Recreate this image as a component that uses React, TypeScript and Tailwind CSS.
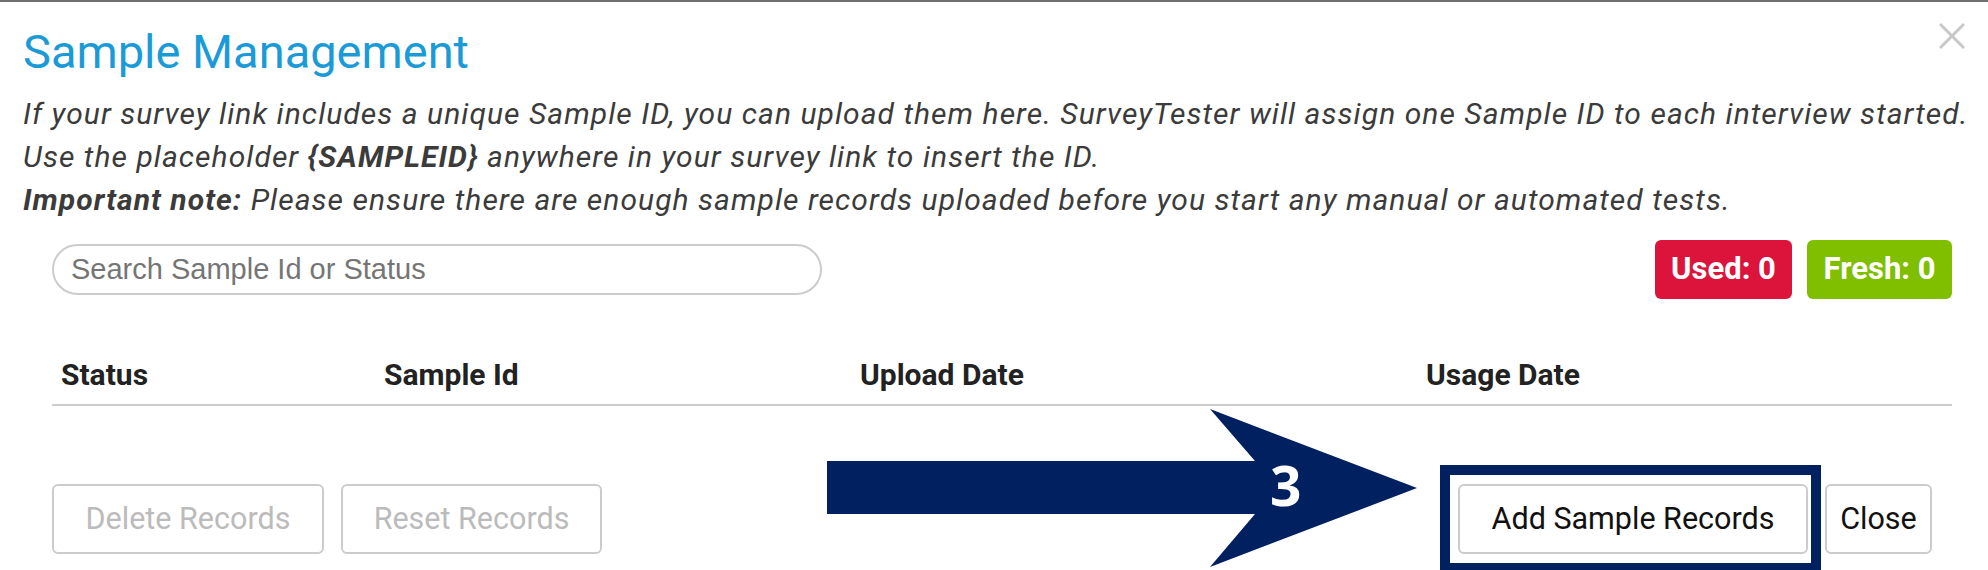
import React from "react";

export default function App() {
  return (
    <div className="relative w-[1988px] h-[570px] overflow-hidden bg-white border-t-2 border-[#6f6f6f] font-['Roboto',sans-serif]">
      {/* header */}
      <div className="flex items-start justify-between pl-[23px] pr-[23px] pt-[22px]">
        <h1 className="text-[47px] leading-[56px] text-[#1a9bd8] font-normal">Sample Management</h1>
        <button className="mt-[-1px] w-[26px] h-[26px] flex items-center justify-center" aria-label="close">
          <svg width="26" height="26" viewBox="0 0 26 26">
            <path d="M1 1 L25 25 M25 1 L1 25" stroke="#c8c8c8" strokeWidth="3" />
          </svg>
        </button>
      </div>

      {/* description */}
      <div className="pl-[23px] mt-[12px] italic text-[30px] leading-[43px] tracking-[1.05px] text-[#3b3b3b] whitespace-nowrap">
        <div>If your survey link includes a unique Sample ID, you can upload them here. SurveyTester will assign one Sample ID to each interview started.</div>
        <div>
          Use the placeholder <span className="font-bold">{"{SAMPLEID}"}</span> anywhere in your survey link to insert the ID.
        </div>
        <div>
          <span className="font-bold">Important note:</span> Please ensure there are enough sample records uploaded before you start any manual or automated tests.
        </div>
      </div>

      {/* search + badges */}
      <div className="mt-[19px] pl-[52px] pr-[36px] flex items-center justify-between">
        <div className="w-[770px] h-[51px] rounded-full border-2 border-[#cccccc] flex items-center pl-[17px]">
          <span className="font-['Liberation_Sans',Arial,sans-serif] text-[29px] text-[#757575]">Search Sample Id or Status</span>
        </div>
        <div className="flex gap-[15px]">
          <span className="h-[59px] w-[137px] rounded-[6px] bg-[#dc143c] text-white font-bold text-[31px] flex items-center justify-center">Used: 0</span>
          <span className="h-[59px] w-[145px] rounded-[6px] bg-[#7fbf00] text-white font-bold text-[31px] flex items-center justify-center">Fresh: 0</span>
        </div>
      </div>

      {/* table header */}
      <div className="mt-[58px] ml-[52px] mr-[36px] grid grid-cols-[323px_476px_566px_1fr] border-b-2 border-[#cccccc] pb-[11px] text-[30px] leading-[36px] font-bold text-[#222222]">
        <div className="pl-[9px]">Status</div>
        <div className="pl-[9px]">Sample Id</div>
        <div className="pl-[9px]">Upload Date</div>
        <div className="pl-[9px]">Usage Date</div>
      </div>

      {/* footer buttons */}
      <div className="mt-[59px] pl-[52px] pr-[56px] flex items-center justify-between">
        <div className="flex gap-[17px]">
          <button className="w-[272px] h-[70px] rounded-[6px] border-2 border-[#cccccc] text-[30.5px] text-[#bbbbbb] bg-white">Delete Records</button>
          <button className="w-[261px] h-[70px] rounded-[6px] border-2 border-[#cccccc] text-[30.5px] text-[#bbbbbb] bg-white">Reset Records</button>
        </div>
        <div className="flex items-center gap-[4px]">
          <div className="border-[10px] border-[#002060] pl-[8px] pr-[3px] py-[9px]">
            <button className="w-[350px] h-[70px] rounded-[6px] border-2 border-[#cccccc] text-[30.5px] text-[#111111] bg-white">Add Sample Records</button>
          </div>
          <button className="w-[107px] h-[70px] rounded-[6px] border-2 border-[#cccccc] text-[30.5px] text-[#111111] bg-white">Close</button>
        </div>
      </div>

      {/* annotation arrow */}
      <svg className="absolute left-[827px] top-[407px]" width="592" height="160" viewBox="0 0 592 160">
        <polygon points="0,52 428,52 383,0 590,79 383,158 428,105 0,105" fill="#002060" />
        <text x="443" y="97" fill="#ffffff" fontFamily="'Open Sans', sans-serif" fontWeight="700" fontSize="55">3</text>
      </svg>
    </div>
  );
}
